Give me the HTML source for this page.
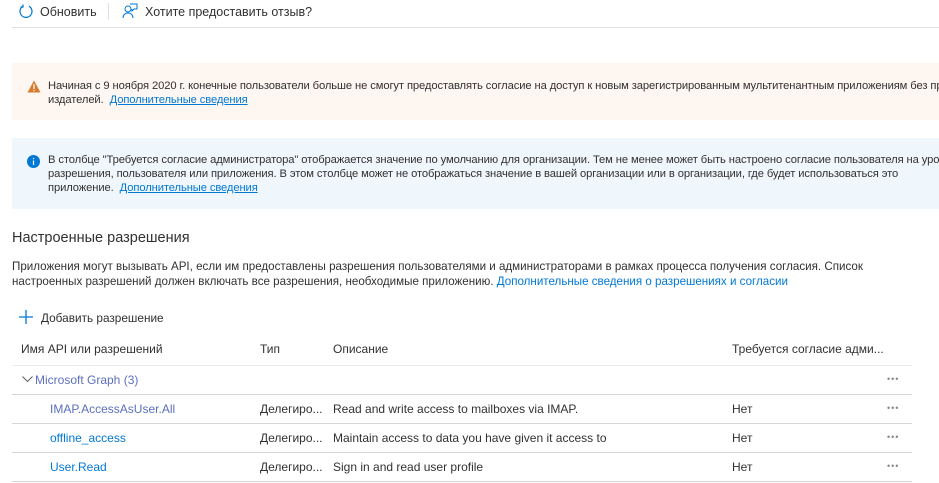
<!DOCTYPE html>
<html><head><meta charset="utf-8"><style>
*{margin:0;padding:0;box-sizing:border-box}
body{width:939px;height:483px;overflow:hidden;background:#fff;font-family:"Liberation Sans",sans-serif;font-size:12px;color:#323130;position:relative}
.a{position:absolute;white-space:nowrap}
a,.l{color:#0078d4;text-decoration:none}
.u{text-decoration:underline}
.line{position:absolute;left:12px;width:900px;height:1px;background:#d6d6d6}
.box{font-size:11.2px;letter-spacing:-0.1px}
.dots{font-size:9px;letter-spacing:1px;color:#8a8886}
</style></head><body>
<svg class="a" style="left:19px;top:4px" width="14" height="14" viewBox="0 0 14 14"><path d="M4 2.2A6 6 0 1 0 10 2.2" fill="none" stroke="#0078d4" stroke-width="1.2"/><path d="M4 0.5V3H1.5" fill="none" stroke="#0078d4" stroke-width="1.2"/></svg>
<div class="a" style="left:40px;top:5px;font-size:12.5px">Обновить</div>
<div class="a" style="left:108px;top:3px;width:1px;height:17px;background:#e1dfdd"></div>
<svg class="a" style="left:122px;top:3px" width="16" height="16" viewBox="0 0 16 16" fill="none" stroke="#0078d4" stroke-width="1"><circle cx="6" cy="6" r="3"/><path d="M1 15c0-3 2-5 5-5s5 2 5 5"/><path d="M8 1h7v5h-3l-2 2V6"/></svg>
<div class="a" style="left:145px;top:5px;font-size:12.5px">Хотите предоставить отзыв?</div>
<div class="a" style="left:12px;top:27px;width:927px;height:1px;background:#e1dfdd"></div>

<div class="a" style="left:12px;top:63px;width:927px;height:57px;background:#fdf6f1"></div>
<svg class="a" style="left:27px;top:80px" width="14" height="13" viewBox="0 0 14 13"><path d="M7 0.5L13.5 12.5H0.5Z" fill="#d47d2f"/><rect x="6.4" y="4" width="1.2" height="5" fill="#fff"/><rect x="6.4" y="10" width="1.2" height="1.2" fill="#fff"/></svg>
<div class="a box" style="left:48px;top:80px">Начиная с 9 ноября 2020 г. конечные пользователи больше не смогут предоставлять согласие на доступ к новым зарегистрированным мультитенантным приложениям без прове</div>
<div class="a box" style="left:48px;top:94px">издателей.&nbsp; <span class="l u">Дополнительные сведения</span></div>

<div class="a" style="left:12px;top:138px;width:927px;height:71px;background:#eff6fc"></div>
<svg class="a" style="left:27px;top:155px" width="13" height="13" viewBox="0 0 13 13"><circle cx="6.5" cy="6.5" r="6.5" fill="#0078d4"/><rect x="5.9" y="5.5" width="1.2" height="4.5" fill="#fff"/><rect x="5.9" y="3" width="1.2" height="1.2" fill="#fff"/></svg>
<div class="a box" style="left:48px;top:154px">В столбце "Требуется согласие администратора" отображается значение по умолчанию для организации. Тем не менее может быть настроено согласие пользователя на уровне</div>
<div class="a box" style="left:48px;top:168px">разрешения, пользователя или приложения. В этом столбце может не отображаться значение в вашей организации или в организации, где будет использоваться это</div>
<div class="a box" style="left:48px;top:182px">приложение.&nbsp; <span class="l u">Дополнительные сведения</span></div>

<div class="a" style="left:12px;top:230px;font-size:14.5px">Настроенные разрешения</div>
<div class="a" style="left:12px;top:260px;font-size:11.6px">Приложения могут вызывать API, если им предоставлены разрешения пользователями и администраторами в рамках процесса получения согласия. Список</div>
<div class="a" style="left:12px;top:275px;font-size:11.6px">настроенных разрешений должен включать все разрешения, необходимые приложению. <span class="l">Дополнительные сведения о разрешениях и согласии</span></div>

<svg class="a" style="left:19px;top:310px" width="14" height="14" viewBox="0 0 14 14"><path d="M7 0V14M0 7H14" stroke="#0078d4" stroke-width="1.3"/></svg>
<div class="a" style="left:41px;top:311px;font-size:11.8px">Добавить разрешение</div>

<div class="a" style="left:21px;top:342px">Имя API или разрешений</div>
<div class="a" style="left:260px;top:342px">Тип</div>
<div class="a" style="left:333px;top:342px">Описание</div>
<div class="a" style="left:732px;top:342px">Требуется согласие адми...</div>
<div class="line" style="top:365px;background:#ebebeb"></div>

<svg class="a" style="left:22px;top:376px" width="11" height="7" viewBox="0 0 11 7"><path d="M0.5 0.5L5.5 5.5L10.5 0.5" fill="none" stroke="#605e5c"/></svg>
<div class="a l" style="left:35px;top:373px;color:#5c6fbf">Microsoft Graph (3)</div>
<div class="a dots" style="left:887px;top:374px">•••</div>
<div class="line" style="top:394px"></div>

<div class="a l" style="left:50px;top:402px;color:#5c6fbf">IMAP.AccessAsUser.All</div>
<div class="a" style="left:260px;top:402px">Делегиро...</div>
<div class="a" style="left:333px;top:402px">Read and write access to mailboxes via IMAP.</div>
<div class="a" style="left:732px;top:402px">Нет</div>
<div class="a dots" style="left:887px;top:403px">•••</div>
<div class="line" style="top:423px"></div>

<div class="a l" style="left:50px;top:431px">offline_access</div>
<div class="a" style="left:260px;top:431px">Делегиро...</div>
<div class="a" style="left:333px;top:431px">Maintain access to data you have given it access to</div>
<div class="a" style="left:732px;top:431px">Нет</div>
<div class="a dots" style="left:887px;top:432px">•••</div>
<div class="line" style="top:452px"></div>

<div class="a l" style="left:50px;top:460px">User.Read</div>
<div class="a" style="left:260px;top:460px">Делегиро...</div>
<div class="a" style="left:333px;top:460px">Sign in and read user profile</div>
<div class="a" style="left:732px;top:460px">Нет</div>
<div class="a dots" style="left:887px;top:461px">•••</div>
<div class="line" style="top:481px"></div>
</body></html>
